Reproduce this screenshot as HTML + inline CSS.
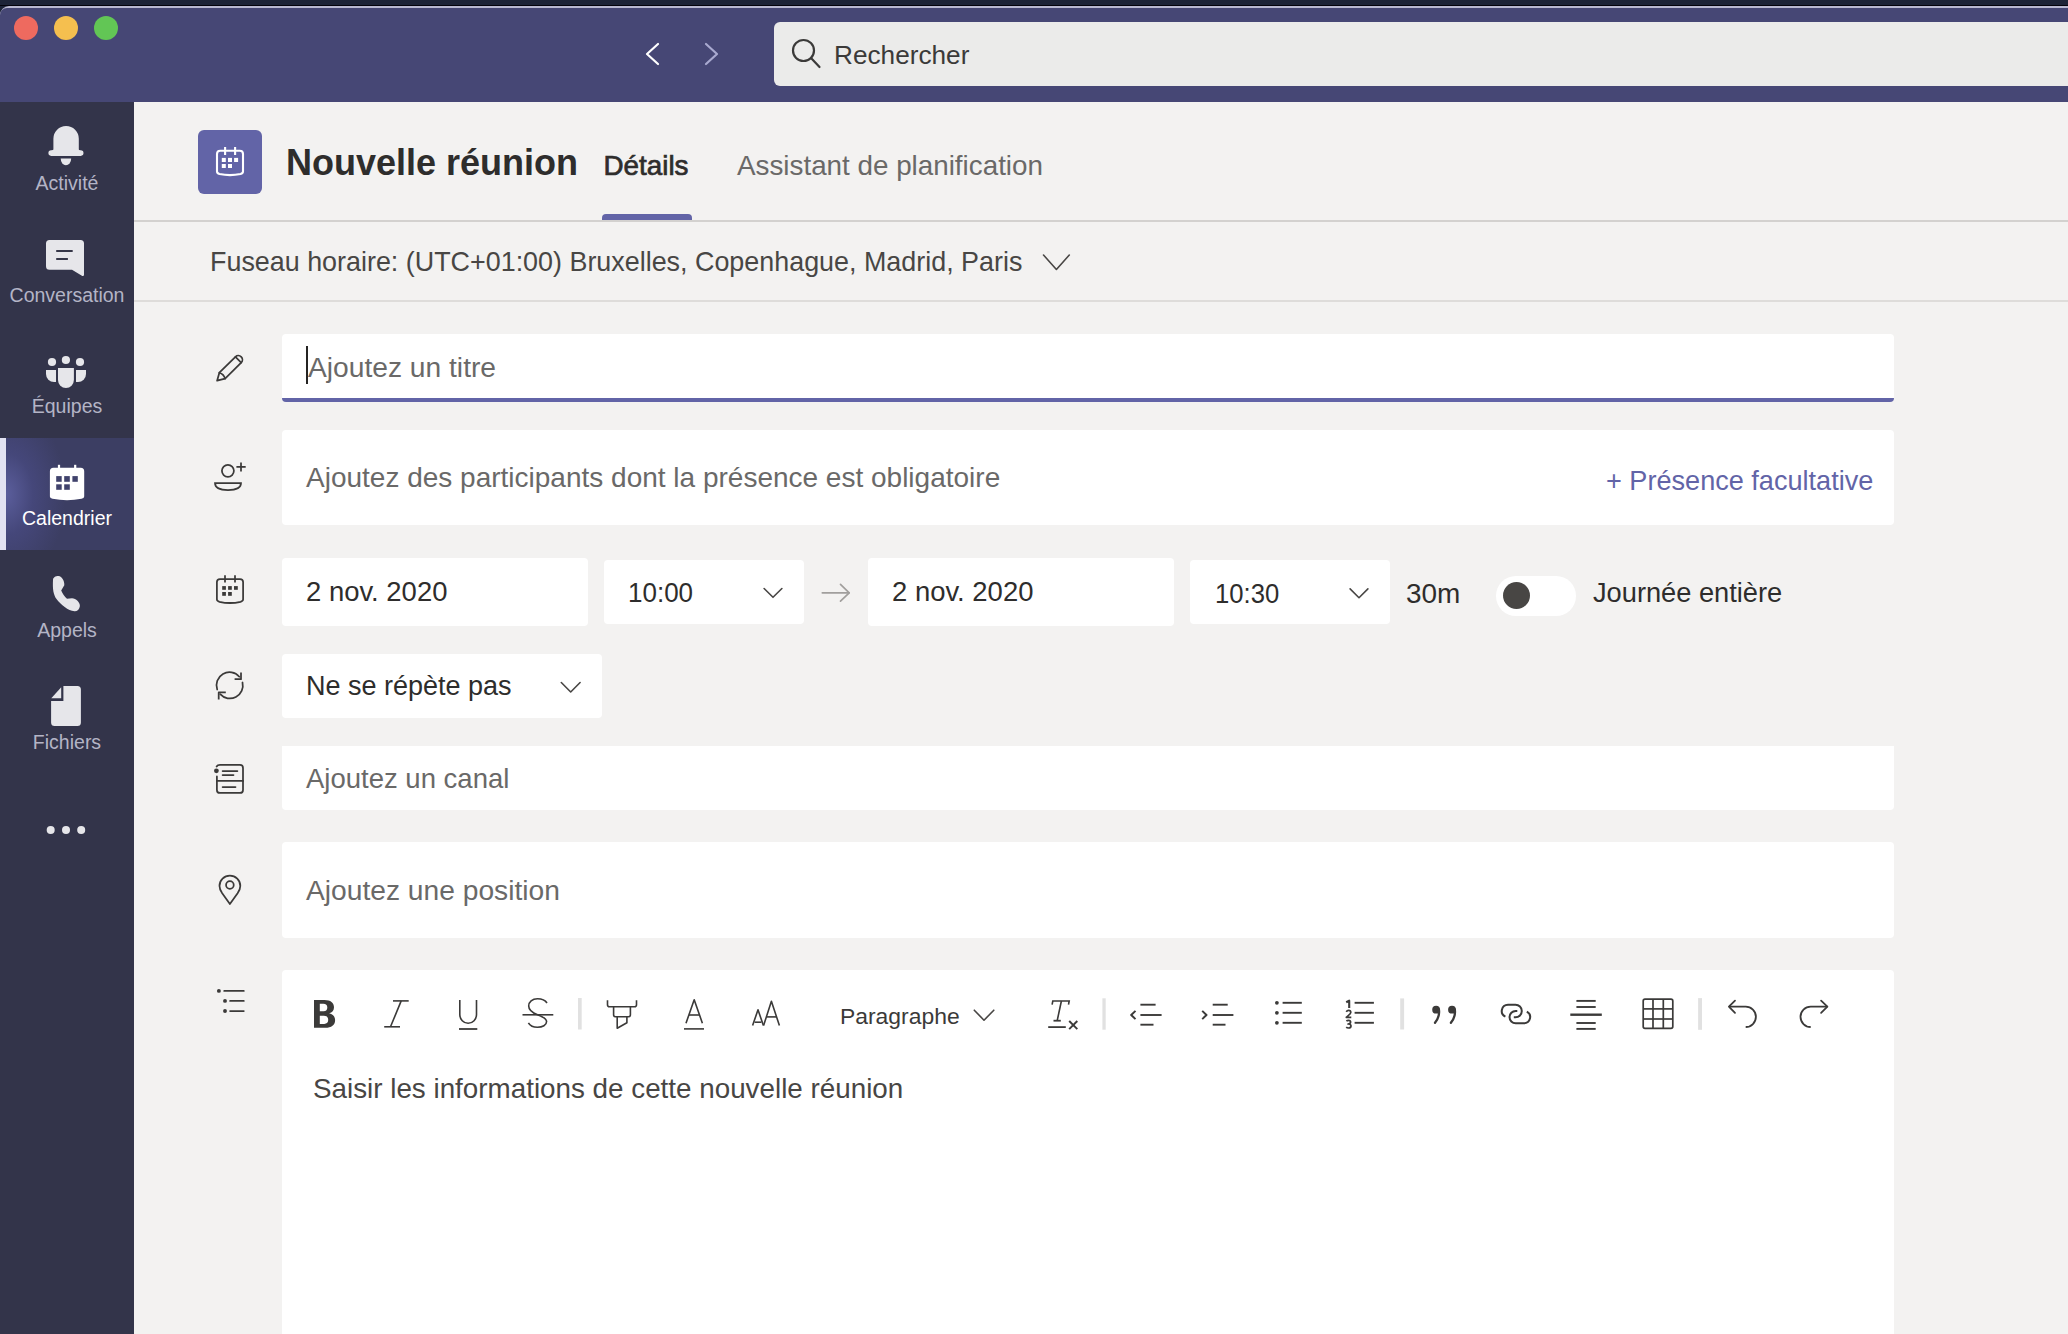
<!DOCTYPE html>
<html><head><meta charset="utf-8">
<style>
*{margin:0;padding:0;box-sizing:border-box}
html,body{width:2068px;height:1334px;overflow:hidden;background:#1d2437;font-family:"Liberation Sans",sans-serif}
.a{position:absolute}
.t{position:absolute;white-space:nowrap;line-height:1}
#win{position:absolute;left:0;top:8px;width:2068px;height:1326px;background:#464775;border-top-left-radius:7px;overflow:hidden}
#hl{position:absolute;left:0;top:6px;width:2068px;height:20px;background:#b9b9d1;border-top-left-radius:9px}
.dot{position:absolute;width:24px;height:24px;border-radius:50%}
#side{position:absolute;left:0;top:102px;width:134px;height:1232px;background:#33344a}
#main{position:absolute;left:134px;top:102px;width:1934px;height:1232px;background:#f3f2f1}
.lab{position:absolute;width:134px;left:0;text-align:center;font-size:19.5px;color:#b4b4c6;line-height:1}
.box{position:absolute;background:#fff;border-radius:4px}
.ph{color:#6a6968}
.dk{color:#2e2d2c}
svg{position:absolute;overflow:visible}
</style></head><body>
<div class="a" style="left:0;top:5px;width:2068px;height:1px;background:#04040c"></div>
<div id="hl"></div>
<div id="win"></div>
<div class="dot" style="left:14px;top:16px;background:#ee6a5f"></div>
<div class="dot" style="left:54px;top:16px;background:#f5bf4f"></div>
<div class="dot" style="left:94px;top:16px;background:#62c655"></div>

<!-- nav arrows -->
<svg style="left:0;top:0" width="2068" height="100">
  <polyline points="658,44 647,54 658,64" fill="none" stroke="#ffffff" stroke-width="2.2" stroke-linecap="round" stroke-linejoin="round"/>
  <polyline points="706,44 717,54 706,64" fill="none" stroke="#a9aad0" stroke-width="2.2" stroke-linecap="round" stroke-linejoin="round"/>
</svg>
<!-- search -->
<div class="a" style="left:774px;top:22px;width:1300px;height:64px;background:#ebebea;border-radius:6px"></div>
<svg style="left:0;top:0" width="2068" height="100">
  <circle cx="803.5" cy="50.5" r="10.5" fill="none" stroke="#3b3a39" stroke-width="2.2"/>
  <line x1="811" y1="58" x2="819.5" y2="67" stroke="#3b3a39" stroke-width="2.2" stroke-linecap="round"/>
</svg>
<div class="t" style="left:834px;top:42px;font-size:26.2px;color:#3b3a39">Rechercher</div>

<div id="side"></div>
<div id="main"></div>

<!-- active sidebar item -->
<div class="a" style="left:0;top:438px;width:134px;height:112px;background:radial-gradient(ellipse 60px 90px at 6px 56px,#5b5e9c 0%,#45477a 45%,#3c3e63 100%)"></div>
<div class="a" style="left:0;top:438px;width:6px;height:112px;background:#e2e2f2"></div>

<!-- sidebar labels -->
<div class="lab" style="top:174px">Activité</div>
<div class="lab" style="top:286px">Conversation</div>
<div class="lab" style="top:397px">Équipes</div>
<div class="lab" style="top:509px;color:#fff">Calendrier</div>
<div class="lab" style="top:621px">Appels</div>
<div class="lab" style="top:733px">Fichiers</div>

<!-- header -->
<div class="a" style="left:198px;top:130px;width:64px;height:64px;background:#6264a7;border-radius:6px"></div>
<div class="t dk" style="left:286px;top:145.3px;font-size:36px;font-weight:bold">Nouvelle réunion</div>
<div class="t dk" style="left:603.5px;top:152.2px;font-size:27.8px;-webkit-text-stroke:0.7px #2e2d2c">Détails</div>
<div class="t" style="left:737px;top:152.3px;font-size:27.8px;color:#6a6968">Assistant de planification</div>
<div class="a" style="left:602px;top:214px;width:90px;height:7px;background:#6264a7;border-radius:4px 4px 0 0"></div>
<div class="a" style="left:134px;top:220px;width:1934px;height:2px;background:#d3d1cf"></div>

<div class="t" style="left:210px;top:249.1px;font-size:26.9px;color:#484644">Fuseau horaire: (UTC+01:00) Bruxelles, Copenhague, Madrid, Paris</div>
<div class="a" style="left:134px;top:300px;width:1934px;height:2px;background:#dedcda"></div>

<!-- fields -->
<div class="box" style="left:282px;top:334px;width:1612px;height:68px;border-bottom:4px solid #6264a7"></div>
<div class="a" style="left:306px;top:346px;width:2px;height:38px;background:#252423"></div>
<div class="t ph" style="left:308px;top:352.5px;font-size:28.2px">Ajoutez un titre</div>

<div class="box" style="left:282px;top:430px;width:1612px;height:95px"></div>
<div class="t ph" style="left:306px;top:464.3px;font-size:28px">Ajoutez des participants dont la présence est obligatoire</div>
<div class="t" style="left:1606px;top:466.7px;font-size:27.1px;color:#6264a7">+ Présence facultative</div>

<div class="box" style="left:282px;top:558px;width:306px;height:68px"></div>
<div class="t dk" style="left:306px;top:576.7px;font-size:28.5px;transform:scaleX(0.963);transform-origin:0 0">2 nov. 2020</div>
<div class="box" style="left:604px;top:560px;width:200px;height:64px"></div>
<div class="t dk" style="left:628.2px;top:578.1px;font-size:28.5px;transform:scaleX(0.912);transform-origin:0 0">10:00</div>
<div class="box" style="left:868px;top:558px;width:306px;height:68px"></div>
<div class="t dk" style="left:892px;top:576.9px;font-size:28.5px;transform:scaleX(0.963);transform-origin:0 0">2 nov. 2020</div>
<div class="box" style="left:1190px;top:560px;width:200px;height:64px"></div>
<div class="t dk" style="left:1214.8px;top:579.1px;font-size:28.5px;transform:scaleX(0.9);transform-origin:0 0">10:30</div>
<div class="t dk" style="left:1406.3px;top:578.9px;font-size:28.5px;transform:scaleX(0.98);transform-origin:0 0">30m</div>
<div class="a" style="left:1496px;top:576px;width:80px;height:40px;background:#fff;border-radius:20px"></div>
<div class="a" style="left:1502.5px;top:582px;width:27px;height:27px;background:#484644;border-radius:50%"></div>
<div class="t dk" style="left:1593px;top:578.7px;font-size:27.5px;transform:scaleX(0.99);transform-origin:0 0">Journée entière</div>

<div class="box" style="left:282px;top:654px;width:320px;height:64px"></div>
<div class="t dk" style="left:306px;top:672.5px;font-size:27px">Ne se répète pas</div>

<div class="box" style="left:282px;top:746px;width:1612px;height:64px;border-radius:0 0 4px 4px"></div>
<div class="t ph" style="left:306px;top:765.1px;font-size:27.5px">Ajoutez un canal</div>

<div class="box" style="left:282px;top:842px;width:1612px;height:96px"></div>
<div class="t ph" style="left:306px;top:876.3px;font-size:28.2px">Ajoutez une position</div>

<div class="box" style="left:282px;top:970px;width:1612px;height:400px"></div>
<div class="t" style="left:840px;top:1005.1px;font-size:22.9px;color:#3b3a39">Paragraphe</div>
<div class="t" style="left:313px;top:1075px;font-size:27.8px;color:#484644">Saisir les informations de cette nouvelle réunion</div>


<svg style="left:0;top:0" width="2068" height="1334" viewBox="0 0 2068 1334">
<g fill="#e6e6ea">
  <!-- bell -->
  <path d="M53.4,149.5 V138.7 A12.7,12.7 0 0 1 78.8,138.7 V149.5 Q78.8,150.3 80.5,150.3 H80.7 A2.8,2.8 0 0 1 80.7,155.9 H51.2 A2.8,2.8 0 0 1 51.2,150.3 H51.4 Q53.4,150.3 53.4,149.5 Z"/>
  <path d="M60.7,158.6 H71.2 A5.25,6.6 0 0 1 60.7,158.6 Z"/>
  <!-- chat -->
  <path d="M49.5,240 H80.5 Q84,240 84,243.5 V274.5 Q84,277 81.5,275.6 L72,269.8 H49.5 Q46,269.8 46,266.3 V243.5 Q46,240 49.5,240 Z"/>
  <!-- teams -->
  <circle cx="52" cy="362" r="4.1"/><circle cx="65.9" cy="360" r="4.1"/><circle cx="80" cy="362" r="4.1"/>
  <path d="M46,370 H56 V382 H54 A8,8 0 0 1 46,374 Z"/>
  <path d="M58,368 H73.9 V380.1 A7.95,7.95 0 0 1 58,380.1 Z"/>
  <path d="M76,370 H86 V374 A8,8 0 0 1 78,382 H76 Z"/>
  <!-- phone -->
  <path d="M53,580 C53,577.5 55.5,576 58.5,576 C62,576.5 64.6,581 64.3,585.2 L61.2,590.4 C62.5,593.5 64.5,596.5 67,598.8 L72,598.2 C76,598.5 80,602 79.9,606 C79.5,609.5 77,611.5 74.5,611.3 C68,610.5 61,605 56.5,599 C53.5,595 52.5,589 53,580 Z"/>
  <!-- file -->
  <path d="M63.4,686 H77.4 Q80.9,686 80.9,689.5 V722.5 Q80.9,726 77.4,726 H54.6 Q51.1,726 51.1,722.5 V701 H63.4 Z"/>
  <path d="M51.3,698.3 L61.2,687.2 V698.3 Z"/>
  <!-- dots -->
  <circle cx="50.7" cy="830" r="4"/><circle cx="66" cy="830" r="4"/><circle cx="81.2" cy="830" r="4"/>
</g>
<g stroke="#2c2d40" stroke-width="1.9">
  <line x1="56.2" y1="251" x2="72.7" y2="251"/>
  <line x1="56.2" y1="259" x2="67.9" y2="259"/>
</g>
<!-- active calendar -->
<g fill="#ffffff">
  <path d="M53.4,467.7 H80.7 Q84.2,467.7 84.2,471.2 V496.5 Q84.2,498.3 81.5,498.8 Q67,501.5 52.6,498.8 Q49.9,498.3 49.9,496.5 V471.2 Q49.9,467.7 53.4,467.7 Z"/>
  <rect x="57.9" y="464.8" width="2.2" height="4"/><rect x="74.1" y="464.8" width="2.2" height="4"/>
</g>
<g fill="#40426c">
  <rect x="56.2" y="476.1" width="5.5" height="5.7"/><rect x="64.2" y="476.1" width="5.6" height="5.7"/><rect x="72.4" y="476.1" width="5.4" height="5.7"/>
  <rect x="56.2" y="484.3" width="5.5" height="5.5"/><rect x="64.2" y="484.3" width="5.6" height="5.5"/>
</g>

<!-- header calendar icon -->
<g fill="none" stroke="#ffffff" stroke-width="2.1">
  <path d="M217,154 Q217,150.8 220.2,150.8 H239.8 Q243,150.8 243,154 V171.5 Q243,173.3 240.5,174 Q230,176.2 219.5,174 Q217,173.3 217,171.5 Z"/>
  <line x1="225.1" y1="147" x2="225.1" y2="155"/><line x1="235.1" y1="147" x2="235.1" y2="155"/>
</g>
<g fill="#ffffff">
  <rect x="221.8" y="157.9" width="4" height="4.1"/><rect x="228" y="157.9" width="4" height="4.1"/><rect x="234.1" y="157.9" width="4" height="4.1"/>
  <rect x="221.8" y="164" width="4" height="4"/><rect x="228" y="164" width="4" height="4"/>
</g>

<!-- field icons -->
<g fill="none" stroke="#3b3a39" stroke-width="1.75" stroke-linejoin="round" stroke-linecap="round">
  <!-- pencil -->
  <g transform="translate(217.1,380.7) rotate(-44.6)">
    <path d="M0,0 L7.2,-4.1 H29.8 A4.1,4.1 0 0 1 29.8,4.1 H7.2 Z"/>
    <path d="M7.2,-4.1 Q9.4,0 7.2,4.1"/>
    <line x1="29.8" y1="-4.1" x2="29.8" y2="4.1"/>
  </g>
  <!-- add participant -->
  <circle cx="227.9" cy="470.8" r="6"/>
  <line x1="241" y1="462.4" x2="241" y2="471.6" stroke-linecap="butt"/>
  <line x1="236.4" y1="466.9" x2="245.7" y2="466.9" stroke-linecap="butt"/>
  <path d="M215,483 H241 C241,488.5 235.5,490 228,490 C220.5,490 215,488.5 215,483 Z" stroke-linejoin="miter"/>
  <!-- date calendar -->
  <path d="M216.9,582 Q216.9,579 220,579 H240 Q243.1,579 243.1,582 V599.5 Q243.1,601 240.5,601.8 Q230,604.2 219.5,601.8 Q216.9,601 216.9,599.5 Z"/>
  <line x1="225" y1="575.2" x2="225" y2="582.5" stroke-linecap="butt"/><line x1="235" y1="575.2" x2="235" y2="582.5" stroke-linecap="butt"/>
  <!-- repeat -->
  <path d="M217.2,689.5 A13,13 0 0 1 239.3,676.7"/>
  <polyline points="234.6,679.2 241,679.2 241,672.4" stroke-linecap="butt"/>
  <path d="M242.5,682.5 A13,13 0 0 1 220.2,694.2"/>
  <polyline points="225.8,692.4 218.7,692.4 218.7,699.6" stroke-linecap="butt"/>
  <!-- canal -->
  <path d="M216.9,776.4 V789.9 Q216.9,792.9 219.9,792.9 H240 Q243,792.9 243,789.9 V767.9 Q243,764.9 240,764.9 H220 Q217.5,764.9 216.6,766.5"/>
  <line x1="216.9" y1="780.9" x2="243" y2="780.9"/>
  <line x1="222.6" y1="771" x2="237.4" y2="771"/>
  <line x1="222.6" y1="775" x2="233.5" y2="775"/>
  <line x1="222.6" y1="787" x2="235.5" y2="787"/>
  <!-- pin -->
  <path d="M229.9,904 L222.2,893.2 C220.3,890.4 219.5,888.4 219.5,885.9 C219.5,880 224.2,875.6 229.9,875.6 C235.6,875.6 240.3,880 240.3,885.9 C240.3,888.4 239.5,890.4 237.6,893.2 Z"/>
  <circle cx="229.9" cy="885" r="3.85"/>
  <!-- list -->
  <line x1="224.2" y1="990.9" x2="243.8" y2="990.9"/>
  <line x1="230.1" y1="1000.9" x2="243.8" y2="1000.9"/>
  <line x1="230.1" y1="1011" x2="243.8" y2="1011"/>
</g>
<g fill="#3b3a39">
  <rect x="222.2" y="586.1" width="3.7" height="3.7"/><rect x="228.1" y="586.1" width="3.7" height="3.7"/><rect x="234" y="586.1" width="3.8" height="3.7"/>
  <rect x="222.2" y="592" width="3.7" height="3.8"/><rect x="228.1" y="592" width="3.7" height="3.8"/>
  <circle cx="216.4" cy="770.8" r="2.4"/>
  <circle cx="218.9" cy="990.9" r="1.95"/><circle cx="225" cy="1000.9" r="1.95"/><circle cx="225" cy="1011" r="1.95"/>
</g>

<!-- chevrons / arrows -->
<g fill="none" stroke="#484644" stroke-width="1.6" stroke-linecap="round" stroke-linejoin="round">
  <polyline points="1043.5,255 1056.4,269.5 1069.3,255"/>
  <polyline points="764.1,588.5 773,597.3 781.9,588.5"/>
  <polyline points="1350.1,588.9 1359,597.7 1367.9,588.9"/>
  <polyline points="561.3,682.5 570.7,692 580.1,682.5"/>
  <polyline points="974.3,1010.2 984,1020.2 993.8,1010.2"/>
</g>
<g fill="none" stroke="#a19f9d" stroke-width="1.7" stroke-linecap="round" stroke-linejoin="round">
  <line x1="822.3" y1="592.8" x2="849" y2="592.8"/>
  <polyline points="840.5,584.4 849.2,592.8 840.5,601.1"/>
</g>

<!-- toolbar -->
<g fill="#e1e1e1">
  <rect x="578" y="998" width="3.7" height="31.5"/>
  <rect x="1102.4" y="998.3" width="3.3" height="31.4"/>
  <rect x="1400.2" y="998.4" width="3.9" height="31.1"/>
  <rect x="1698.1" y="998.1" width="3.9" height="31.7"/>
</g>
<g fill="none" stroke="#3b3a39" stroke-width="1.6" stroke-linejoin="round">
  <!-- italic -->
  <line x1="393" y1="1000.9" x2="408.7" y2="1000.9"/>
  <line x1="384.2" y1="1026.8" x2="400" y2="1026.8"/>
  <line x1="401.2" y1="1000.9" x2="390.5" y2="1026.8"/>
  <!-- underline -->
  <path d="M459.8,1000 V1014.5 A8.35,8.8 0 0 0 476.5,1014.5 V1000"/>
  <line x1="459" y1="1029" x2="477.3" y2="1029" stroke-width="1.8"/>
  <!-- strike -->
  <path d="M547,1003 C545,999.8 541.5,998.8 537.5,998.8 C532.2,998.8 528.7,1002 528.7,1006 C528.7,1010.5 533,1013 537.5,1014.8 C542.5,1016.6 546.6,1018.5 546.6,1021.6 C546.6,1025 542.5,1027.3 537.5,1027.3 C533,1027.3 529.8,1025.2 528.4,1022.8"/>
  <line x1="522.5" y1="1014.8" x2="553.3" y2="1014.8"/>
  <!-- highlighter -->
  <path d="M607.5,1000.2 V1004.7 Q607.5,1006.7 609.5,1006.7 H634.5 Q636.5,1006.7 636.5,1004.7 V1000.2"/>
  <path d="M613.6,1006.7 V1014.7 Q613.6,1016.7 615.6,1016.7 H628.4 Q630.4,1016.7 630.4,1014.7 V1006.7"/>
  <path d="M617.2,1016.7 V1028.3 L626.9,1022.8 V1016.7"/>
  <!-- A underline -->
  <polyline points="686,1023.2 694.2,999.8 702.4,1023.2"/>
  <line x1="689" y1="1015" x2="699.4" y2="1015"/>
  <line x1="684" y1="1028.9" x2="704" y2="1028.9"/>
  <!-- AA -->
  <polyline points="752.6,1025.5 758,1009.8 763.4,1025.5"/>
  <line x1="754.6" y1="1022.2" x2="761.4" y2="1022.2"/>
  <polyline points="763.6,1025.5 771.4,1001.3 779.4,1025.5"/>
  <line x1="766.5" y1="1016.9" x2="776.3" y2="1016.9"/>
  <!-- Tx -->
  <path d="M1052.1,1004.6 L1052.8,1001 H1069.2 L1068.5,1004.6" stroke-linejoin="miter"/>
  <line x1="1061.4" y1="1001" x2="1057.2" y2="1020.6"/>
  <line x1="1053.5" y1="1020.7" x2="1060.8" y2="1020.7" stroke-width="1.8"/>
  <line x1="1048.2" y1="1027.1" x2="1065.8" y2="1027.1" stroke-width="1.8"/>
  <line x1="1069.2" y1="1021" x2="1077.3" y2="1029.2" stroke-width="1.9"/>
  <line x1="1077.3" y1="1021" x2="1069.2" y2="1029.2" stroke-width="1.9"/>
  <!-- outdent -->
  <polyline points="1135.5,1010.9 1131.2,1015 1135.5,1019.1" stroke-width="2"/>
  <line x1="1140.4" y1="1004.7" x2="1155.6" y2="1004.7" stroke-width="1.9"/>
  <line x1="1140.4" y1="1015" x2="1161.6" y2="1015" stroke-width="1.9"/>
  <line x1="1140.4" y1="1024.7" x2="1153.5" y2="1024.7" stroke-width="1.9"/>
  <!-- indent -->
  <polyline points="1202.2,1010.9 1206.5,1015 1202.2,1019.1" stroke-width="2"/>
  <line x1="1212.7" y1="1004.7" x2="1227.7" y2="1004.7" stroke-width="1.9"/>
  <line x1="1212.7" y1="1015" x2="1233.4" y2="1015" stroke-width="1.9"/>
  <line x1="1212.7" y1="1024.7" x2="1225.5" y2="1024.7" stroke-width="1.9"/>
  <!-- bullets -->
  <line x1="1282.6" y1="1002.8" x2="1301.8" y2="1002.8" stroke-width="1.9"/>
  <line x1="1282.6" y1="1012.8" x2="1301.8" y2="1012.8" stroke-width="1.9"/>
  <line x1="1282.6" y1="1022.8" x2="1301.8" y2="1022.8" stroke-width="1.9"/>
  <!-- numbered -->
  <line x1="1354.6" y1="1002.8" x2="1373.9" y2="1002.8" stroke-width="1.9"/>
  <line x1="1354.6" y1="1012.8" x2="1373.9" y2="1012.8" stroke-width="1.9"/>
  <line x1="1354.6" y1="1022.8" x2="1373.9" y2="1022.8" stroke-width="1.9"/>
  <!-- link -->
  <path d="M1505.4,1016.7 A6.3,6.3 0 0 1 1508,1004.7 H1515.5 A6.3,6.3 0 0 1 1515.5,1017.3 H1513.8" stroke-width="2" stroke-linecap="butt"/>
  <path d="M1517.3,1010.9 H1515.7 A6.2,6.2 0 0 0 1515.7,1023.3 H1523.9 A6.2,6.2 0 0 0 1526.8,1011.6" stroke-width="2" stroke-linecap="butt"/>
  <!-- align center -->
  <line x1="1576.4" y1="1000.9" x2="1595.7" y2="1000.9" stroke-width="1.9"/>
  <line x1="1576.4" y1="1007" x2="1595.7" y2="1007" stroke-width="1.9"/>
  <line x1="1570.3" y1="1014.7" x2="1601.8" y2="1014.7" stroke-width="2.4"/>
  <line x1="1576.4" y1="1023" x2="1595.7" y2="1023" stroke-width="1.9"/>
  <line x1="1576.4" y1="1028.9" x2="1595.7" y2="1028.9" stroke-width="1.9"/>
  <!-- table -->
  <rect x="1643.2" y="999.2" width="29.6" height="29.2" rx="1.8" stroke-width="1.7"/>
  <line x1="1653" y1="999.2" x2="1653" y2="1028.4" stroke-width="1.7"/>
  <line x1="1663.3" y1="999.2" x2="1663.3" y2="1028.4" stroke-width="1.7"/>
  <line x1="1643.2" y1="1008.9" x2="1672.8" y2="1008.9" stroke-width="1.7"/>
  <line x1="1643.2" y1="1019" x2="1672.8" y2="1019" stroke-width="1.7"/>
  <!-- undo -->
  <polyline points="1735,1000.6 1728.9,1006.6 1735,1012.9" stroke-width="1.8" stroke-linecap="round"/>
  <path d="M1729,1006.6 H1745.7 A10.2,10.2 0 0 1 1745.7,1027" stroke-width="1.8"/>
  <!-- redo -->
  <polyline points="1821.1,1000.6 1827.4,1006.6 1821.1,1012.9" stroke-width="1.8" stroke-linecap="round"/>
  <path d="M1827.3,1006.6 H1810.7 A10.2,10.2 0 0 0 1810.7,1027" stroke-width="1.8"/>
</g>
<g fill="#3b3a39">
  <circle cx="1276.9" cy="1002.8" r="1.9"/><circle cx="1276.9" cy="1012.8" r="1.9"/><circle cx="1276.9" cy="1022.8" r="1.9"/>
  <!-- quotes -->
  <circle cx="1436.1" cy="1009.7" r="3.9"/><circle cx="1452" cy="1009.7" r="3.9"/>
</g>
<g fill="none" stroke="#3b3a39" stroke-width="2.3" stroke-linecap="round">
  <path d="M1438.9,1009.5 C1439.8,1015 1437.8,1019.3 1435,1022.8"/>
  <path d="M1454.8,1009.5 C1455.7,1015 1453.7,1019.3 1450.9,1022.8"/>
</g>
</svg>
<svg style="left:0;top:0" width="2068" height="1334"><path fill="#3b3a39" fill-rule="evenodd" d="M314,1000 H324.5 C330.5,1000 334,1002.8 334,1007.2 C334,1010.3 332.2,1012.5 329.2,1013.3 C332.9,1014.1 335.1,1016.6 335.1,1020.2 C335.1,1024.9 331.4,1027.8 325.3,1027.8 H314 Z M319.8,1003.8 V1011.2 H323.6 C326.2,1011.2 327.3,1009.8 327.3,1007.5 C327.3,1005.1 325.9,1003.8 323.3,1003.8 Z M319.8,1015.7 V1023.9 H324.2 C327,1023.9 328.2,1022.4 328.2,1019.8 C328.2,1017.2 326.7,1015.7 323.9,1015.7 Z"/></svg>
<svg style="left:0;top:0" width="2068" height="1334"><g fill="none" stroke="#3b3a39" stroke-width="2" stroke-linejoin="round">
<path d="M1346.2,1002.3 L1349.2,1000.7 V1008" stroke-width="2.1"/>
<path d="M1346.3,1011.8 C1346.8,1010.8 1347.7,1010.4 1348.6,1010.4 C1350,1010.4 1350.8,1011.3 1350.8,1012.5 C1350.8,1014.4 1347.4,1016 1346.3,1017.3 H1351.3" stroke-width="1.7"/>
<path d="M1346.4,1021 C1347,1020.5 1347.8,1020.3 1348.5,1020.3 C1349.9,1020.3 1350.6,1021.1 1350.6,1022.1 C1350.6,1023.3 1349.6,1024 1348,1024 C1350,1024 1351,1024.9 1351,1026 C1351,1027.3 1349.9,1028 1348.4,1028 C1347.5,1028 1346.7,1027.7 1346.2,1027.2" stroke-width="1.7"/>
</g></svg>
</body></html>
